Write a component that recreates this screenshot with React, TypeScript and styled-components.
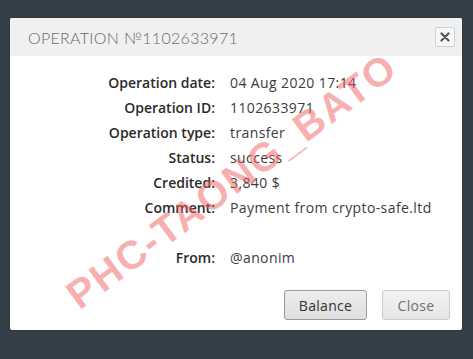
import React from "react";
import styled, { createGlobalStyle } from "styled-components";

const Global = createGlobalStyle`
  html, body { margin: 0; padding: 0; background: #343f49; }
  body { width: 473px; height: 359px; overflow: hidden; font-family: "Open Sans", "Liberation Sans", sans-serif; }
`;

const Page = styled.div`
  padding: 18px 11px 0 10px;
`;

const Dialog = styled.div`
  position: relative;
  background: #ffffff;
  border-radius: 2px;
  overflow: hidden;
  box-shadow: 0 0 2px rgba(0, 0, 0, 0.3);
`;

const Header = styled.div`
  height: 38px;
  background: #f0f0f0;
  display: flex;
  align-items: center;
  justify-content: space-between;
  padding: 0 7px 0 18px;
`;

const Title = styled.div`
  font-family: Lato, "Open Sans", sans-serif;
  font-weight: 300;
  font-size: 16px;
  letter-spacing: 0.3px;
  color: #6a6a6a;
`;

const CloseX = styled.div`
  width: 18px;
  height: 18px;
  border: 1px solid #cfcfcf;
  border-radius: 2px;
  background: #f7f7f7;
  display: flex;
  align-items: center;
  justify-content: center;
`;

const Body = styled.div`
  padding: 14px 12px 10px 0;
`;

const Grid = styled.div`
  display: grid;
  grid-template-columns: 205px 1fr;
  column-gap: 15px;
  grid-auto-rows: 25px;
  align-items: center;
`;

const Label = styled.div`
  text-align: right;
  font-size: 14px;
  font-weight: 600;
  color: #2a2a2a;
  white-space: nowrap;
`;

const Value = styled.div`
  font-size: 14px;
  font-weight: 400;
  letter-spacing: 0.4px;
  color: #3c3c3c;
  white-space: nowrap;
`;

const Footer = styled.div`
  display: flex;
  justify-content: flex-end;
  gap: 15px;
  margin-top: 20px;
`;

const Button = styled.button<{ $primary?: boolean }>`
  height: 30px;
  padding: 0;
  width: ${(p) => (p.$primary ? "83px" : "68px")};
  border-radius: 3px;
  border: 1px solid ${(p) => (p.$primary ? "#9a9a9a" : "#cccccc")};
  background: ${(p) =>
    p.$primary ? "linear-gradient(#ededed, #dedede)" : "linear-gradient(#f2f2f2, #e6e6e6)"};
  color: ${(p) => (p.$primary ? "#333" : "#707070")};
  font-family: "Open Sans", sans-serif;
  font-size: 14px;
  letter-spacing: 0.3px;
`;

const Watermark = styled.div`
  position: absolute;
  left: 222px;
  top: 163px;
  transform: translate(-50%, -50%) rotate(-36.5deg);
  font-family: "Liberation Sans", Arial, sans-serif;
  font-weight: 700;
  font-size: 40px;
  letter-spacing: 2px;
  color: rgba(240, 95, 95, 0.5);
  white-space: nowrap;
  pointer-events: none;
`;

const rows: [string, string][] = [
  ["Operation date:", "04 Aug 2020 17:14"],
  ["Operation ID:", "1102633971"],
  ["Operation type:", "transfer"],
  ["Status:", "success"],
  ["Credited:", "3,840 $"],
  ["Comment:", "Payment from crypto-safe.ltd"],
  ["", ""],
  ["From:", "@anonim"],
];

export default function App() {
  return (
    <>
      <Global />
      <Page>
        <Dialog>
          <Header>
            <Title>OPERATION №1102633971</Title>
            <CloseX>
              <svg width="10" height="10" viewBox="0 0 10 10">
                <path d="M1.5 1.5 L8.5 8.5 M8.5 1.5 L1.5 8.5" stroke="#555" strokeWidth="2.2" strokeLinecap="round" />
              </svg>
            </CloseX>
          </Header>
          <Body>
            <Grid>
              {rows.map(([l, v], i) => (
                <React.Fragment key={i}>
                  <Label>{l}</Label>
                  <Value>{v}</Value>
                </React.Fragment>
              ))}
            </Grid>
            <Footer>
              <Button $primary>Balance</Button>
              <Button>Close</Button>
            </Footer>
          </Body>
          <Watermark>PHC-TAONG_BATO</Watermark>
        </Dialog>
      </Page>
    </>
  );
}
